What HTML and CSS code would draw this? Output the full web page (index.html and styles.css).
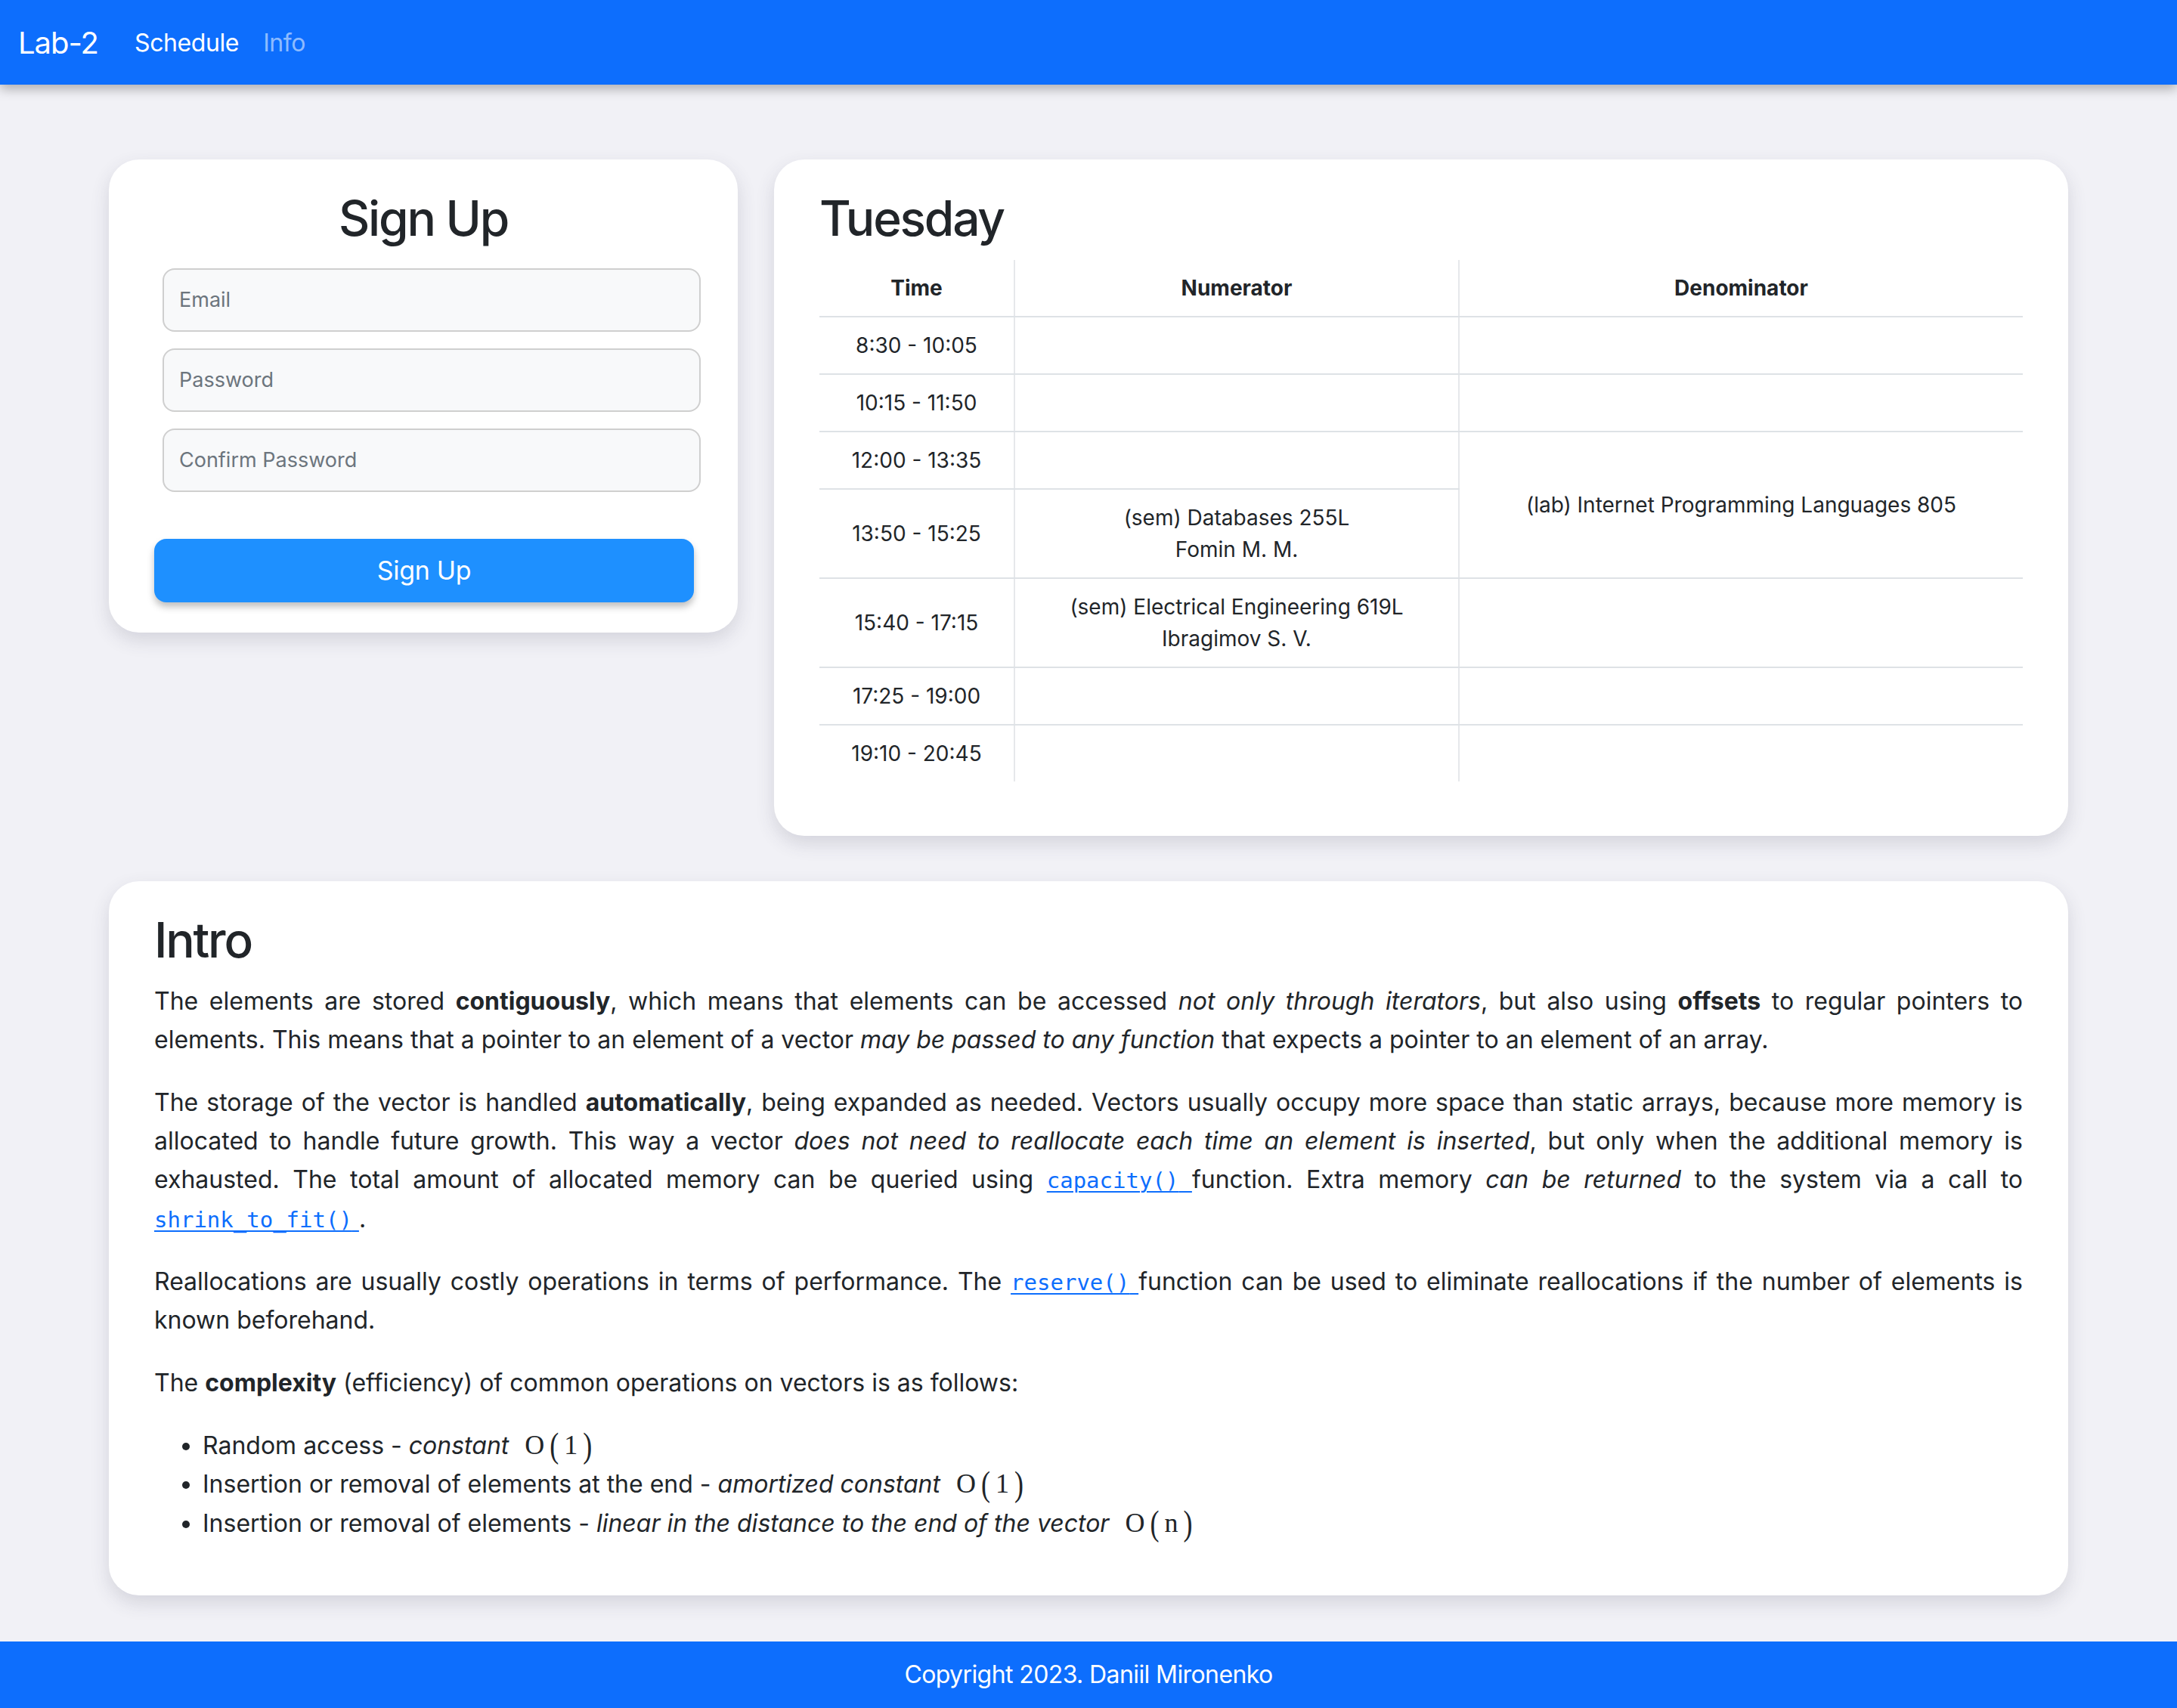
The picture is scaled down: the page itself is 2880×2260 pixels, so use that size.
FILE: index.html
```html
<!DOCTYPE html>
<html lang="en">
<head>
<meta charset="utf-8">
<title>Lab-2</title>
<link rel="stylesheet" href="styles.css">
</head>
<body>
<nav class="navbar">
  <a class="brand" href="#">Lab-2</a>
  <a class="nav-link active" href="#">Schedule</a>
  <a class="nav-link" href="#">Info</a>
</nav>

<main class="container">
  <div class="top-row">
    <section class="card signup">
      <h2 class="card-title center">Sign Up</h2>
      <form class="signup-form">
        <input class="form-control" type="email" placeholder="Email">
        <input class="form-control" type="password" placeholder="Password">
        <input class="form-control" type="password" placeholder="Confirm Password">
        <button class="btn-signup" type="button">Sign Up</button>
      </form>
    </section>

    <section class="card schedule">
      <h2 class="card-title">Tuesday</h2>
      <table class="table">
        <thead>
          <tr><th class="col-time">Time</th><th class="col-num">Numerator</th><th>Denominator</th></tr>
        </thead>
        <tbody>
          <tr><td>8:30 - 10:05</td><td></td><td></td></tr>
          <tr><td>10:15 - 11:50</td><td></td><td></td></tr>
          <tr><td>12:00 - 13:35</td><td></td><td rowspan="2">(lab) Internet Programming Languages 805</td></tr>
          <tr><td>13:50 - 15:25</td><td>(sem) Databases 255L<br>Fomin M. M.</td></tr>
          <tr><td>15:40 - 17:15</td><td>(sem) Electrical Engineering 619L<br>Ibragimov S. V.</td><td></td></tr>
          <tr><td>17:25 - 19:00</td><td></td><td></td></tr>
          <tr class="last"><td>19:10 - 20:45</td><td></td><td></td></tr>
        </tbody>
      </table>
    </section>
  </div>

  <section class="card intro">
    <h2 class="card-title">Intro</h2>
    <p>The elements are stored <b>contiguously</b>, which means that elements can be accessed <i>not only through iterators</i>, but also using <b>offsets</b> to regular pointers to elements. This means that a pointer to an element of a vector <i>may be passed to any function</i> that expects a pointer to an element of an array.</p>
    <p>The storage of the vector is handled <b>automatically</b>, being expanded as needed. Vectors usually occupy more space than static arrays, because more memory is allocated to handle future growth. This way a vector <i>does not need to reallocate each time an element is inserted</i>, but only when the additional memory is exhausted. The total amount of allocated memory can be queried using <a class="code-link" href="#"><code>capacity()</code> </a>function. Extra memory <i>can be returned</i> to the system via a call to <a class="code-link" href="#"><code>shrink_to_fit()</code> </a>.</p>
    <p>Reallocations are usually costly operations in terms of performance. The <a class="code-link" href="#"><code>reserve()</code> </a>function can be used to eliminate reallocations if the number of elements is known beforehand.</p>
    <p>The <b>complexity</b> (efficiency) of common operations on vectors is as follows:</p>
    <ul class="list">
      <li>Random access - <i>constant</i> <span class="math"><span class="mi">O</span><span class="paren">(</span><span class="mi">1</span><span class="paren">)</span></span></li>
      <li>Insertion or removal of elements at the end - <i>amortized constant</i> <span class="math"><span class="mi">O</span><span class="paren">(</span><span class="mi">1</span><span class="paren">)</span></span></li>
      <li>Insertion or removal of elements - <i>linear in the distance to the end of the vector</i> <span class="math"><span class="mi">O</span><span class="paren">(</span><span class="mi">n</span><span class="paren">)</span></span></li>
    </ul>
  </section>
</main>

<footer class="footer">Copyright 2023. Daniil Mironenko</footer>
</body>
</html>
```

FILE: styles.css
```css
* { box-sizing: border-box; }

html, body {
  margin: 0;
  padding: 0;
}

body {
  background: #f1f1f6;
  color: #212529;
  font-family: Inter, "Noto Sans", "Liberation Sans", sans-serif;
  font-size: 32px;
  line-height: 1.5;
  min-height: 100vh;
  display: flex;
  flex-direction: column;
}

/* Navbar */
.navbar {
  height: 112px;
  flex: none;
  background: #0d6efd;
  display: flex;
  align-items: center;
  padding: 2px 24px 0;
  box-shadow: 0 6px 14px rgba(0, 0, 0, 0.28);
  position: relative;
  z-index: 2;
}

.brand {
  color: #fff;
  font-size: 40px;
  letter-spacing: -1px;
  text-decoration: none;
  margin-right: 32px;
}

.nav-link {
  color: rgba(255, 255, 255, 0.55);
  font-size: 32px;
  letter-spacing: -0.4px;
  text-decoration: none;
  padding: 0 16px;
}

.nav-link.active { color: #fff; }

/* Layout */
.container {
  flex: 1 0 auto;
  width: 2592px;
  margin: 0 auto;
  padding: 99px 0 58px;
}

.top-row {
  display: grid;
  grid-template-columns: 832px 1712px;
  column-gap: 48px;
  align-items: start;
  margin-bottom: 60px;
}

.card {
  background: #fff;
  border-radius: 40px;
  box-shadow: 0 10px 24px rgba(60, 60, 90, 0.16);
  padding: 40px 60px;
}

.card-title {
  font-size: 64px;
  font-weight: 500;
  line-height: 1.2;
  letter-spacing: -2.2px;
  margin: 0 0 16px;
}

.center { text-align: center; }

/* Sign up */
.signup-form {
  display: flex;
  flex-direction: column;
  padding-top: 11px;
}

.form-control {
  display: block;
  height: 84px;
  margin: 0 -11px 22px 11px;
  padding: 0 20px;
  font-family: inherit;
  font-size: 27px;
  color: #212529;
  background: #f8f9fa;
  border: 2px solid #cfcfcf;
  border-radius: 16px;
  outline: none;
}

.form-control::placeholder { color: #6c757d; }

.btn-signup {
  margin-top: 40px;
  margin-right: -2px;
  height: 84px;
  font-family: inherit;
  font-size: 34px;
  letter-spacing: -0.3px;
  color: #fff;
  background: #1e90ff;
  border: none;
  border-radius: 16px;
  box-shadow: 0 6px 10px rgba(0, 0, 0, 0.25);
}

/* Table */
.table {
  width: 100%;
  border-collapse: collapse;
  font-size: 28px;
  line-height: 1.5;
  margin-bottom: 32px;
  margin-top: 0;
}

.table th, .table td {
  text-align: center;
  vertical-align: middle;
  padding: 16px;
  border-bottom: 2px solid #dee2e6;
  border-left: 2px solid #e6e8eb;
}

.table th:first-child, .table td:first-child { border-left: none; }

.table th { font-weight: 700; }

.table tr.last td { border-bottom: none; }

.col-time { width: 258px; }
.col-num { width: 588px; }

/* Intro */
.intro p {
  margin: 0 0 32px;
  text-align: justify;
  line-height: 1.6;
}

.code-link {
  color: #0d6efd;
  text-decoration: underline;
  text-decoration-thickness: 2px;
  text-underline-offset: 4px;
}

.code-link code {
  font-family: "DejaVu Sans Mono", "Liberation Mono", monospace;
  font-size: 29px;
}

.list {
  margin: 0 0 30px;
  padding-left: 64px;
  line-height: 1.6;
}

.math {
  font-family: "Liberation Serif", "DejaVu Serif", serif;
  font-size: 36px;
  line-height: 1;
  margin-left: 10px;
}

.math .mi { padding: 0 2px; }

.math .paren {
  display: inline-block;
  line-height: 1;
  transform: scaleY(1.3);
  padding: 0 5px;
}

/* Footer */
.footer {
  flex: none;
  height: 88px;
  background: #0d6efd;
  color: #fff;
  text-align: center;
  line-height: 88px;
  font-size: 32px;
  letter-spacing: -0.6px;
}
```
